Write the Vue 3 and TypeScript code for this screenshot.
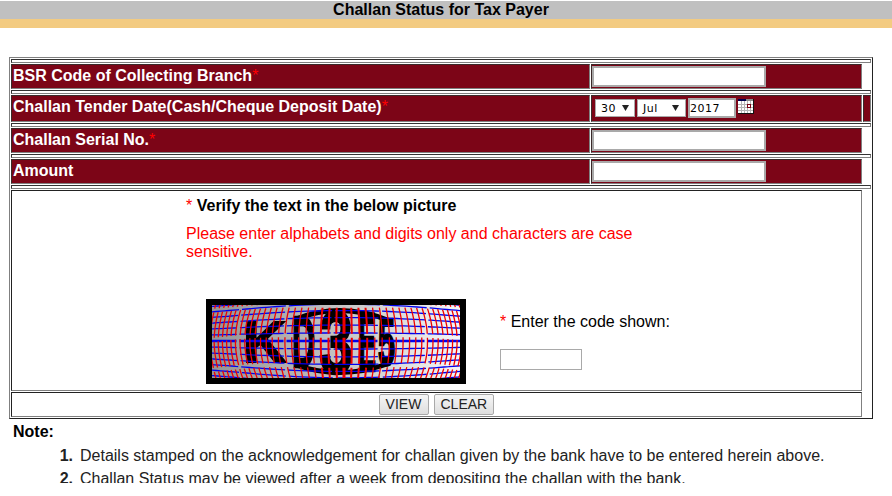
<script setup lang="ts">
import { computed } from "vue";

const cx = 132;
const cy = 36;

// lens warp of the captcha grid, strongest in the middle of the picture
const warp = (x: number, y: number) => {
    const dx = (x - cx) / 100;
    const dy = (y - cy) / 48;
    const f = 1 + 0.5 * Math.exp(-(dx * dx + dy * dy));
    return [cx + (x - cx) * f, cy + (y - cy) * f];
};

const line = (pts: number[][]) => pts.map((p) => p[0].toFixed(1) + "," + p[1].toFixed(1)).join(" ");

const redLines = computed(() => {
    const out: { points: string; width: number }[] = [];
    for (let i = -26; i <= 26; i++) {
        const x = cx + i * 5.2;
        const pts: number[][] = [];
        for (let y = -20; y <= 90; y += 4) pts.push(warp(x, y));
        const near = Math.abs(i);
        out.push({ points: line(pts), width: near < 1 ? 3 : near < 4 ? 2 : 1.3 });
    }
    return out;
});

const blueLines = computed(() => {
    const out: { points: string; width: number }[] = [];
    for (let i = -8; i <= 8; i++) {
        const y = cy + i * 5.4;
        const pts: number[][] = [];
        for (let x = -10; x <= 260; x += 5) pts.push(warp(x, y));
        out.push({ points: line(pts), width: i === 0 ? 2.4 : 1.3 });
    }
    return out;
});

const notes = [
    "Details stamped on the acknowledgement for challan given by the bank have to be entered herein above.",
    "Challan Status may be viewed after a week from depositing the challan with the bank.",
];
</script>

<template>
    <div class="page">
        <div class="title">Challan Status for Tax Payer</div>
        <div class="title-strip"></div>

        <div class="form">
            <div class="spacer"></div>
            <div class="row">
                <div class="cell label">BSR Code of Collecting Branch<span class="req">*</span></div>
                <div class="cell field"><input class="text" type="text" /></div>
            </div>
            <div class="spacer"></div>
            <div class="row row-date">
                <div class="cell label">Challan Tender Date(Cash/Cheque Deposit Date)<span class="req">*</span></div>
                <div class="cell field date">
                    <span class="sel w-day">30
                        <svg width="7" height="6" viewBox="0 0 7 6"><path d="M0 0h7L3.5 6z" fill="#222" /></svg>
                    </span>
                    <span class="sel w-month">Jul
                        <svg width="7" height="6" viewBox="0 0 7 6"><path d="M0 0h7L3.5 6z" fill="#222" /></svg>
                    </span>
                    <input class="year" type="text" value="2017" />
                    <svg class="cal" width="16" height="15" viewBox="0 0 16 15">
                        <rect x="0" y="0" width="15" height="14" fill="#fff" />
                        <rect x="0" y="0" width="8" height="2" fill="#000050" />
                        <rect x="8" y="0" width="7" height="2" fill="#8a8a8a" />
                        <path d="M0 5.5h15M0 8.5h15M0 11.5h15M3.5 2v12M6.5 2v12M9.5 2v12M12.5 2v12" stroke="#b5b5b5" stroke-width="1" fill="none" />
                        <rect x="9.5" y="5.5" width="3" height="3" fill="#fff" stroke="#7c0517" />
                        <path d="M15.5 0v15M0 14.5h16" stroke="#111" stroke-width="1" fill="none" />
                    </svg>
                </div>
                <div class="cell tail"></div>
            </div>
            <div class="spacer"></div>
            <div class="row">
                <div class="cell label">Challan Serial No.<span class="req">*</span></div>
                <div class="cell field"><input class="text" type="text" /></div>
            </div>
            <div class="spacer"></div>
            <div class="row">
                <div class="cell label">Amount</div>
                <div class="cell field"><input class="text" type="text" /></div>
            </div>
            <div class="spacer"></div>

            <div class="verify">
                <div class="verify-copy">
                    <div class="verify-head"><span class="req">*</span> <b>Verify the text in the below picture</b></div>
                    <div class="verify-msg">Please enter alphabets and digits only and characters are case sensitive.</div>
                </div>
                <div class="verify-body">
                    <svg class="captcha" width="248" height="73" viewBox="0 0 248 73">
                        <defs>
                            <linearGradient id="cap-bg" x1="0" x2="1" y1="0" y2="0">
                                <stop offset="0" stop-color="#949494" />
                                <stop offset="0.5" stop-color="#c2c2c2" />
                                <stop offset="1" stop-color="#f6f6f6" />
                            </linearGradient>
                        </defs>
                        <rect width="248" height="73" fill="url(#cap-bg)" />
                        <g class="cap-letters">
                            <text transform="translate(31 57) scale(1.65 1.6)">K</text>
                            <text transform="translate(80 62) scale(0.9 2)">D</text>
                            <text transform="translate(107 68) scale(1.7 2.45)">3</text>
                            <text transform="translate(146 66) scale(0.75 2.3)">E</text>
                            <text transform="translate(166 60) scale(0.85 1.85)">5</text>
                        </g>
                        <path class="cap-arcs" d="M84 14Q130 -4 178 16M84 60Q130 76 178 58" />
                        <polyline v-for="(l, i) in blueLines" :key="'b' + i" :points="l.points" fill="none" stroke="#0000f0" :stroke-width="l.width" stroke-dasharray="44 3" />
                        <polyline v-for="(l, i) in redLines" :key="'r' + i" :points="l.points" fill="none" stroke="#f00000" :stroke-width="l.width" stroke-dasharray="26 4" />
                    </svg>
                    <div class="code">
                        <div class="code-label"><span class="req">*</span> Enter the code shown:</div>
                        <input class="code-input" type="text" />
                    </div>
                </div>
            </div>
            <div class="actions">
                <button class="btn" type="button">VIEW</button>
                <button class="btn" type="button">CLEAR</button>
            </div>
        </div>

        <div class="note">Note:</div>
        <ol class="note-list">
            <li v-for="(n, i) in notes" :key="i">
                <b class="num">{{ i + 1 }}.</b>
                <span>{{ n }}</span>
            </li>
        </ol>
    </div>
</template>

<style scoped>
.page {
    height: 483px;
    overflow: hidden;
    padding-top: 1px;
    box-sizing: border-box;
    font-family: "Liberation Sans", Arial, sans-serif;
    font-size: 16px;
    color: #000;
}

.title {
    height: 18px;
    line-height: 17px;
    padding-right: 10px;
    background: #c0c0c0;
    text-align: center;
    font-weight: bold;
}

.title-strip {
    height: 9px;
    background: #f3cb81;
}

.form {
    width: 864px;
    box-sizing: border-box;
    margin: 29px 0 0 9px;
    padding: 1px;
    border: 1px solid;
    border-color: #808080 #222 #222 #808080;
    display: flex;
    flex-direction: column;
    gap: 1px;
}

.spacer {
    width: 860px;
    height: 4px;
    box-sizing: border-box;
    border: 1px solid;
    border-color: #333 #808080 #808080 #333;
}

.row {
    display: flex;
    gap: 1px;
    height: 25px;
}

.row-date {
    height: 27px;
}

.cell {
    box-sizing: border-box;
    background: #7c0517;
    border: 1px solid;
    border-color: #3a2a2a #808080 #808080 #3a2a2a;
}

.label {
    width: 579px;
    padding-left: 1px;
    line-height: 21px;
    color: #fff;
    font-weight: bold;
}

.field {
    width: 271px;
    display: flex;
    align-items: center;
}

.tail {
    width: 8px;
}

.req {
    color: #f00;
    font-weight: normal;
}

.text {
    width: 174px;
    height: 21px;
    box-sizing: border-box;
    margin: 0;
    padding: 1px 2px;
    border: 2px solid #a9a9a9;
    background: #fff;
}

.date {
    padding-left: 3px;
    padding-bottom: 1px;
    gap: 2px;
}

.sel {
    display: flex;
    align-items: center;
    justify-content: space-between;
    height: 18px;
    box-sizing: border-box;
    padding: 0 5px 0 5px;
    border: 1px solid #a9a9a9;
    background: #fff;
    font-family: "DejaVu Sans", Verdana, sans-serif;
    font-size: 11px;
    letter-spacing: 0.5px;
    color: #000;
}

.w-day {
    width: 40px;
}

.w-month {
    width: 49px;
    padding-right: 6px;
}

.year {
    width: 48px;
    height: 20px;
    box-sizing: border-box;
    margin: 0;
    padding: 1px 0 0 0;
    border: 2px solid #a9a9a9;
    background: #fff;
    font-family: "DejaVu Sans", Verdana, sans-serif;
    font-size: 11px;
    letter-spacing: 0.5px;
    color: #000;
}

.cal {
    margin: -3px 0 0 0;
    flex: none;
}

.verify {
    width: 851px;
    height: 201px;
    box-sizing: border-box;
    border: 1px solid;
    border-color: #222 #808080 #808080 #222;
    padding: 5px 0 0 174px;
}

.verify-copy {
    width: 460px;
}

.verify-head {
    line-height: 19px;
}

.verify-msg {
    margin-top: 10px;
    line-height: 18px;
    color: #f00;
}

.verify-body {
    display: flex;
    margin: 38px 0 0 20px;
}

.captcha {
    flex: none;
    border: 6px solid #000;
    overflow: hidden;
}

.cap-letters text {
    font-family: "Liberation Sans", Arial, sans-serif;
    font-weight: bold;
    font-size: 36px;
    fill: #000;
    stroke: #000;
    stroke-width: 2px;
    vector-effect: non-scaling-stroke;
}

.cap-arcs {
    fill: none;
    stroke: #000;
    stroke-width: 5;
}

.code {
    margin-left: 34px;
    padding-top: 13px;
}

.code-label {
    line-height: 20px;
}

.code-input {
    display: block;
    width: 82px;
    height: 21px;
    box-sizing: border-box;
    margin: 17px 0 0;
    border: 1px solid #a9a9a9;
    background: #fff;
}

.actions {
    width: 851px;
    height: 25px;
    box-sizing: border-box;
    border: 1px solid;
    border-color: #222 #808080 #808080 #222;
    display: flex;
    justify-content: center;
    align-items: center;
    gap: 5px;
    padding-right: 1px;
}

.btn {
    height: 21px;
    box-sizing: border-box;
    margin: 0;
    padding: 0 6px 2px;
    border: 1px solid #a9a9a9;
    border-radius: 2px;
    background: linear-gradient(#f6f6f6, #dedede);
    font-family: "Liberation Sans", Arial, sans-serif;
    font-size: 14px;
    color: #222;
}

.btn:first-child {
    width: 50px;
}

.btn:last-child {
    width: 60px;
}

.note {
    margin: 3px 0 0 13px;
    font-weight: bold;
    line-height: 19px;
}

.note-list {
    list-style: none;
    margin: 5px 0 0;
    padding: 0;
}

.note-list li {
    display: flex;
    height: 23px;
    align-items: baseline;
    line-height: 19px;
    color: #222;
}

.num {
    width: 73px;
    margin-right: 7px;
    text-align: right;
    flex: none;
}
</style>

<style>
html,
body {
    background: #fff;
    overflow: hidden;
}
</style>
